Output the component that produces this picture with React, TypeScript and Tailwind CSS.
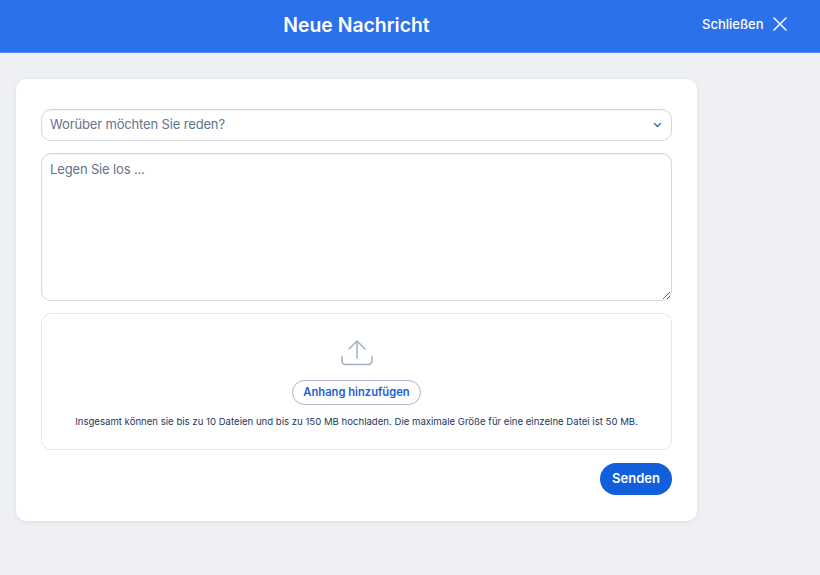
import React from 'react';

const UploadIcon = () => (
  <svg width="32" height="26" viewBox="0 0 32 26" fill="none" stroke="#a3afc0" strokeWidth="1.5" strokeLinecap="round" strokeLinejoin="round">
    <path d="M1 16.5v4.5a3.5 3.5 0 0 0 3.5 3.5h23a3.5 3.5 0 0 0 3.5-3.5v-4.5" />
    <path d="M16 18V1.5" />
    <path d="M8 9l8-8 8 8" />
  </svg>
);

export default function App() {
  return (
    <div className="h-[575px] w-[820px] overflow-hidden bg-[#eef0f3] font-['Inter',sans-serif]">
      <header className="flex h-[53px] items-center border-b border-[#5a8dee] bg-[#2a71eb] pb-[2px] text-white">
        <h1 className="w-[713px] text-center text-[19.4px] font-semibold leading-7">Neue Nachricht</h1>
        <button className="-ml-[11px] -mt-[2px] flex items-center gap-[8px] text-[13px] font-medium leading-5">
          Schließen
          <svg width="16" height="16" viewBox="0 0 16 16" fill="none" stroke="white" strokeWidth="1.5" strokeLinecap="round">
            <path d="M2 2l12 12M14 2L2 14" />
          </svg>
        </button>
      </header>

      <main className="ml-[16px] mt-[26px] w-[681px] rounded-[10px] bg-white px-[25px] pb-[26px] pt-[30px] shadow-[0_1px_4px_rgba(30,50,80,0.1)]">
        <div className="flex h-[32px] items-center justify-between rounded-[10px] border border-[#d5d9df] pl-[8px] pr-[9px] text-[13px] tracking-[-0.15px] text-[#64748b] shadow-[inset_0_1px_1px_rgba(0,0,0,0.06)]">
          <span>Worüber möchten Sie reden?</span>
          <svg width="9" height="6" viewBox="0 0 9 6" fill="none" stroke="#3b69b8" strokeWidth="1.4" strokeLinecap="round" strokeLinejoin="round">
            <path d="M1.5 1.5l3 3 3-3" />
          </svg>
        </div>

        <textarea
          placeholder="Legen Sie los ..."
          className="mt-[12px] block h-[148px] w-full rounded-[10px] border border-[#d5d9df] px-[8px] py-[5px] text-[13px] leading-5 tracking-[-0.15px] shadow-[inset_0_1px_1px_rgba(0,0,0,0.06)] outline-none placeholder:text-[#64748b]"
        />

        <div className="mt-[12px] flex h-[137px] flex-col items-center rounded-[10px] border border-dotted border-[#c9ced6] pt-[26px]">
          <UploadIcon />
          <button className="mt-[14px] h-[25px] rounded-full border-[1.5px] border-[#a9b5c6] px-[10px] text-[11.2px] font-semibold leading-none text-[#1d5fd1]">
            Anhang hinzufügen
          </button>
          <p className="mt-[9px] text-[9.6px] leading-4 text-[#22365a]">
            Insgesamt können sie bis zu 10 Dateien und bis zu 150 MB hochladen. Die maximale Größe für eine einzelne Datei ist 50 MB.
          </p>
        </div>

        <div className="mt-[13px] flex justify-end">
          <button className="h-[32px] w-[72px] rounded-full bg-[#115fdb] text-[13px] font-semibold text-white">Senden</button>
        </div>
      </main>
    </div>
  );
}
